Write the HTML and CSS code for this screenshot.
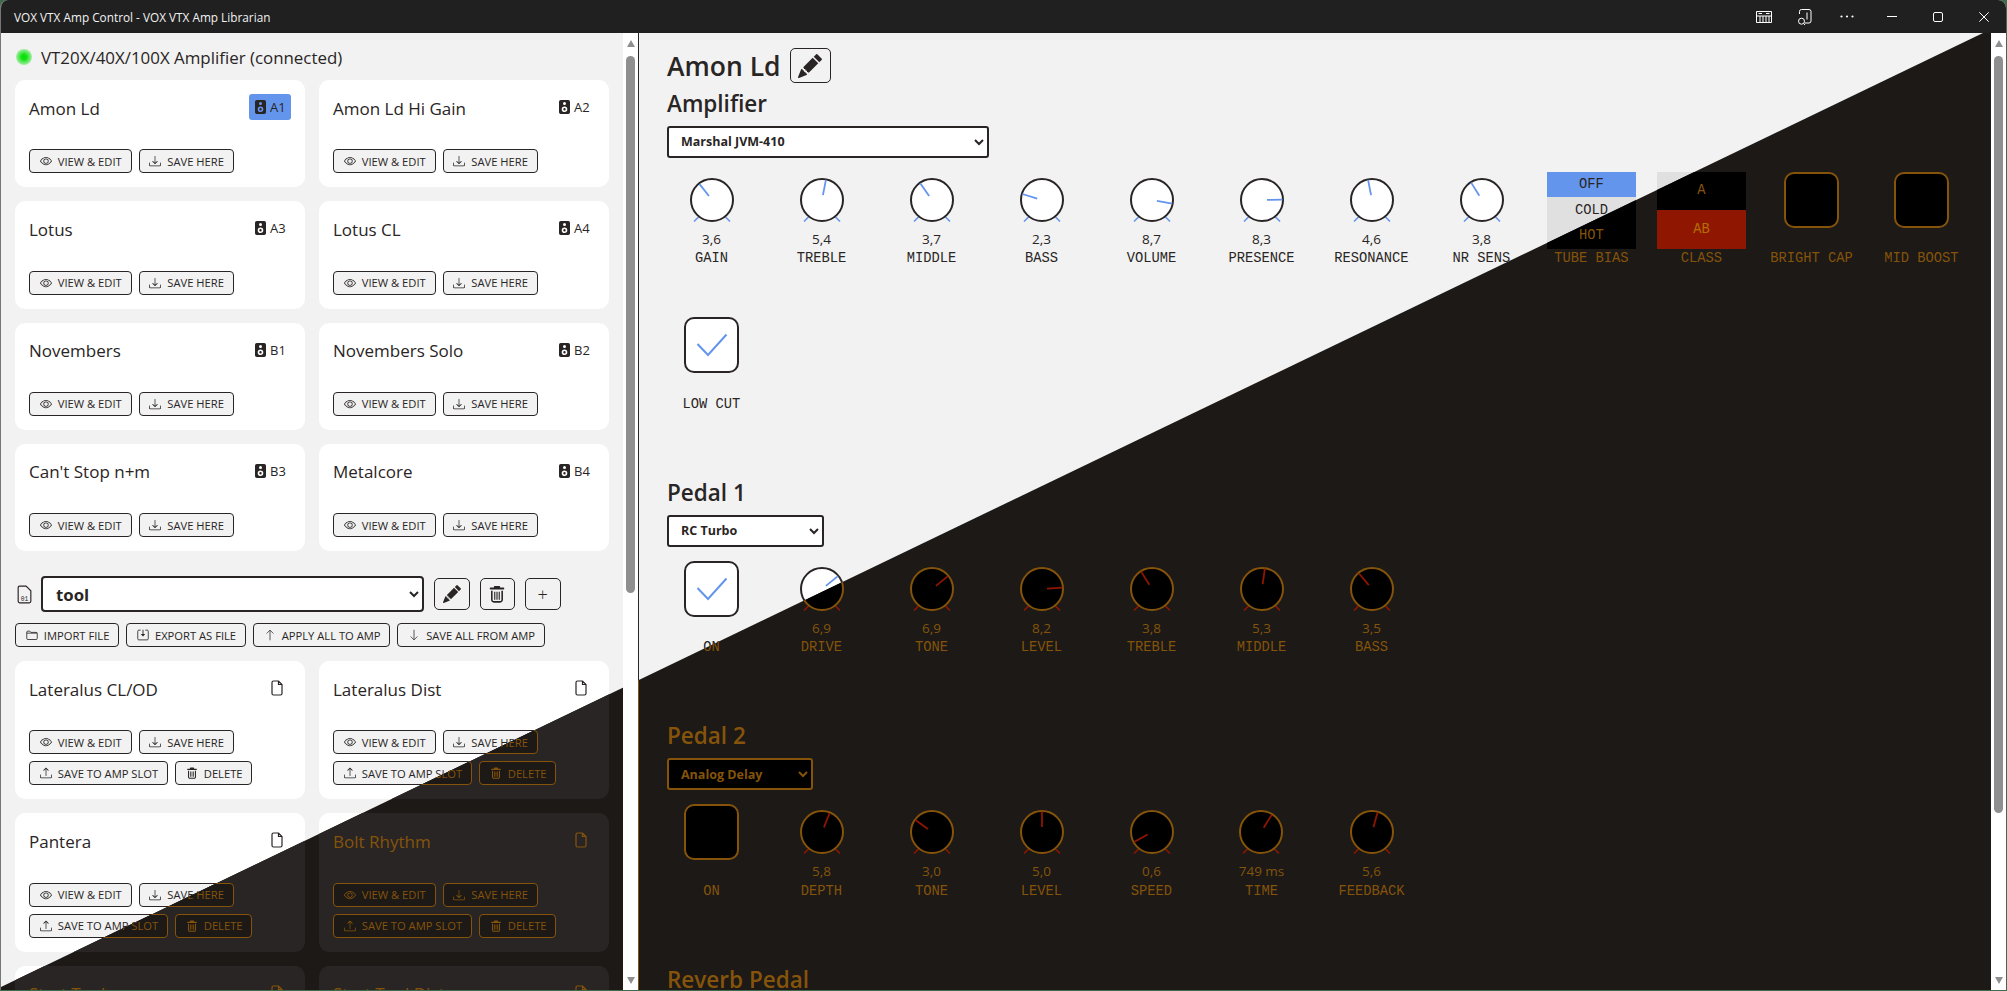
FILE: index.html
```html
<!DOCTYPE html>
<html lang="en">
<head>
<meta charset="utf-8">
<title>VOX VTX Amp Control - VOX VTX Amp Librarian</title>
<link rel="stylesheet" href="styles.css">
</head>
<body>
<svg class="defs" aria-hidden="true">
  <symbol id="i-eye" viewBox="0 0 16 16"><path d="M16 8s-3-5.5-8-5.5S0 8 0 8s3 5.5 8 5.5S16 8 16 8zM1.173 8a13.133 13.133 0 0 1 1.66-2.043C4.12 4.668 5.88 3.5 8 3.5c2.12 0 3.879 1.168 5.168 2.457A13.133 13.133 0 0 1 14.828 8c-.058.087-.122.183-.195.288-.335.48-.83 1.12-1.465 1.755C11.879 11.332 10.119 12.5 8 12.5c-2.12 0-3.879-1.168-5.168-2.457A13.134 13.134 0 0 1 1.172 8z"/><path d="M8 5.5a2.5 2.5 0 1 0 0 5 2.5 2.5 0 0 0 0-5zM4.5 8a3.5 3.5 0 1 1 7 0 3.5 3.5 0 0 1-7 0z"/></symbol>
  <symbol id="i-down" viewBox="0 0 16 16"><path d="M.5 9.9a.5.5 0 0 1 .5.5v2.5a1 1 0 0 0 1 1h12a1 1 0 0 0 1-1v-2.5a.5.5 0 0 1 1 0v2.5a2 2 0 0 1-2 2H2a2 2 0 0 1-2-2v-2.5a.5.5 0 0 1 .5-.5z"/><path d="M7.646 11.854a.5.5 0 0 0 .708 0l3-3a.5.5 0 0 0-.708-.708L8.5 10.293V1.5a.5.5 0 0 0-1 0v8.793L5.354 8.146a.5.5 0 1 0-.708.708l3 3z"/></symbol>
  <symbol id="i-up" viewBox="0 0 16 16"><path d="M.5 9.9a.5.5 0 0 1 .5.5v2.5a1 1 0 0 0 1 1h12a1 1 0 0 0 1-1v-2.5a.5.5 0 0 1 1 0v2.5a2 2 0 0 1-2 2H2a2 2 0 0 1-2-2v-2.5a.5.5 0 0 1 .5-.5z"/><path d="M7.646 1.146a.5.5 0 0 1 .708 0l3 3a.5.5 0 0 1-.708.708L8.5 2.707V11.5a.5.5 0 0 1-1 0V2.707L5.354 4.854a.5.5 0 1 1-.708-.708l3-3z"/></symbol>
  <symbol id="i-pencil" viewBox="0 0 16 16"><path d="M12.854.146a.5.5 0 0 0-.707 0L10.5 1.793 14.207 5.5l1.647-1.646a.5.5 0 0 0 0-.708l-3-3zm.646 6.061L9.793 2.5 3.293 9H3.5a.5.5 0 0 1 .5.5v.5h.5a.5.5 0 0 1 .5.5v.5h.5a.5.5 0 0 1 .5.5v.5h.5a.5.5 0 0 1 .5.5v.207l6.5-6.5zm-7.468 7.468A.5.5 0 0 1 6 13.5V13h-.5a.5.5 0 0 1-.5-.5V12h-.5a.5.5 0 0 1-.5-.5V11h-.5a.5.5 0 0 1-.5-.5V10h-.5a.499.499 0 0 1-.175-.032l-.179.178a.5.5 0 0 0-.11.168l-2 5a.5.5 0 0 0 .65.65l5-2a.5.5 0 0 0 .168-.11l.178-.178z"/></symbol>
  <symbol id="i-trash" viewBox="0 0 16 16"><path d="M5.6.8h4.8l.5 1.5h2.7a.9.9 0 0 1 0 1.8H2.4a.9.9 0 0 1 0-1.8h2.7z"/><path class="st" stroke-width="1.4" d="M3.4 5v8.2a1.8 1.8 0 0 0 1.8 1.8h5.6a1.8 1.8 0 0 0 1.8-1.8V5"/><path class="st" stroke-width="1" d="M6 6v7M8 6v7M10 6v7"/></symbol>
  <symbol id="i-file" viewBox="0 0 12 16"><path class="st" stroke-width="1.2" d="M1 2.500A1.500 1.500 0 0 1 2.500 1H7.500L11 4.500V13.500A1.500 1.500 0 0 1 9.500 15H2.500A1.500 1.500 0 0 1 1 13.500zM7.500 1V4.500H11"/></symbol>
  <symbol id="i-speaker" viewBox="0 0 11 14"><path fill-rule="evenodd" d="M1.8 0h7.4A1.8 1.8 0 0 1 11 1.800v10.400A1.800 1.800 0 0 1 9.200 14H1.800A1.800 1.800 0 0 1 0 12.200V1.800A1.800 1.800 0 0 1 1.800 0zM5.500 2a1.500 1.500 0 1 0 0 3 1.500 1.500 0 0 0 0-3zM5.500 6.400a2.800 2.800 0 1 0 0 5.600 2.800 2.800 0 0 0 0-5.600zM5.500 8a1.200 1.200 0 1 1 0 2.400 1.200 1.200 0 0 1 0-2.400z"/></symbol>
  <symbol id="i-folder" viewBox="0 0 16 16"><path class="st" stroke-width="1.1" d="M1 4V12.500A1.500 1.500 0 0 0 2.500 14H13.500A1.500 1.500 0 0 0 15 12.500V6A1.500 1.500 0 0 0 13.500 4.500H6.500L5 2.800H2.500A1.500 1.500 0 0 0 1 4zM1 5.500H15"/></symbol>
  <symbol id="i-export" viewBox="0 0 16 16"><path class="st" stroke-width="1.100" d="M5 1.500H2.500A1.500 1.500 0 0 0 1 3V13A1.500 1.500 0 0 0 2.500 14.500H13.500A1.500 1.500 0 0 0 15 13V3A1.500 1.500 0 0 0 13.500 1.500H11"/><path d="M7.400 1h1.200v5.500h2.400L8 10 5 6.500h2.400z"/></symbol>
  <symbol id="i-arrow-up" viewBox="0 0 16 16"><path class="st" stroke-width="1" d="M8 15V1.500M3.500 6L8 1.500 12.500 6"/></symbol>
  <symbol id="i-arrow-down" viewBox="0 0 16 16"><path class="st" stroke-width="1" d="M8 1V14.500M3.500 10L8 14.500 12.500 10"/></symbol>
  <symbol id="knob" viewBox="-22 -22 44 44" overflow="visible">
    <path class="tick" d="M-18 21.500L-13 16.500"/>
    <path class="tick" d="M18 21.500L13 16.500"/>
    <circle class="dial" r="21"/>
  </symbol>
</svg>

<div class="window">
  <header class="titlebar">
    <span class="title">VOX VTX Amp Control - VOX VTX Amp Librarian</span>
    <div class="winctl">
      <svg class="wi w-piano" viewBox="0 0 16 12"><path d="M.5.500H15.500V11.500H.5zM.5 5H15.500M4 5V11.500M7 5V11.500M10 5V11.500M13 5V11.500M2.500 2.500H6M10 2.500H13.500"/></svg>
      <svg class="wi w-phone" viewBox="0 0 16 16"><path d="M3.500 5V2.500A2 2 0 0 1 5.500.500H13A2 2 0 0 1 15 2.500V12A2 2 0 0 1 13 14H8.500M11 3.500V10.500M8.500 12.200A3 3 0 1 1 2.500 12.200 3 3 0 0 1 8.500 12.200zM7.500 14.500L9 16"/></svg>
      <svg class="wi w-dots" viewBox="0 0 14 3"><circle cx="1.500" cy="1.500" r="1.100"/><circle cx="7" cy="1.500" r="1.100"/><circle cx="12.500" cy="1.500" r="1.100"/></svg>
      <svg class="wi w-min" viewBox="0 0 10 1"><path d="M0 .5H10"/></svg>
      <svg class="wi w-max" viewBox="0 0 10 10"><rect x=".5" y=".5" width="9" height="9" rx="1.500"/></svg>
      <svg class="wi w-close" viewBox="0 0 10 10"><path d="M.3.300L9.700 9.700M9.700.300L.3 9.700"/></svg>
    </div>
  </header>

  <div class="stage">
    <div class="app light">
      <aside class="library">
        <div class="status"><span class="led"></span><span>VT20X/40X/100X Amplifier (connected)</span></div>
        <div class="cards">
          <article class="card"><div class="card-head"><span class="name">Amon Ld</span><span class="slot slot-on"><svg class="ic-sp"><use href="#i-speaker"/></svg>A1</span></div><div class="actions"><button class="btn"><svg class="ic"><use href="#i-eye"/></svg>View &amp; Edit</button><button class="btn"><svg class="ic"><use href="#i-down"/></svg>Save here</button></div></article>
          <article class="card"><div class="card-head"><span class="name">Amon Ld Hi Gain</span><span class="slot"><svg class="ic-sp"><use href="#i-speaker"/></svg>A2</span></div><div class="actions"><button class="btn"><svg class="ic"><use href="#i-eye"/></svg>View &amp; Edit</button><button class="btn"><svg class="ic"><use href="#i-down"/></svg>Save here</button></div></article>
          <article class="card"><div class="card-head"><span class="name">Lotus</span><span class="slot"><svg class="ic-sp"><use href="#i-speaker"/></svg>A3</span></div><div class="actions"><button class="btn"><svg class="ic"><use href="#i-eye"/></svg>View &amp; Edit</button><button class="btn"><svg class="ic"><use href="#i-down"/></svg>Save here</button></div></article>
          <article class="card"><div class="card-head"><span class="name">Lotus CL</span><span class="slot"><svg class="ic-sp"><use href="#i-speaker"/></svg>A4</span></div><div class="actions"><button class="btn"><svg class="ic"><use href="#i-eye"/></svg>View &amp; Edit</button><button class="btn"><svg class="ic"><use href="#i-down"/></svg>Save here</button></div></article>
          <article class="card"><div class="card-head"><span class="name">Novembers</span><span class="slot"><svg class="ic-sp"><use href="#i-speaker"/></svg>B1</span></div><div class="actions"><button class="btn"><svg class="ic"><use href="#i-eye"/></svg>View &amp; Edit</button><button class="btn"><svg class="ic"><use href="#i-down"/></svg>Save here</button></div></article>
          <article class="card"><div class="card-head"><span class="name">Novembers Solo</span><span class="slot"><svg class="ic-sp"><use href="#i-speaker"/></svg>B2</span></div><div class="actions"><button class="btn"><svg class="ic"><use href="#i-eye"/></svg>View &amp; Edit</button><button class="btn"><svg class="ic"><use href="#i-down"/></svg>Save here</button></div></article>
          <article class="card"><div class="card-head"><span class="name">Can't Stop n+m</span><span class="slot"><svg class="ic-sp"><use href="#i-speaker"/></svg>B3</span></div><div class="actions"><button class="btn"><svg class="ic"><use href="#i-eye"/></svg>View &amp; Edit</button><button class="btn"><svg class="ic"><use href="#i-down"/></svg>Save here</button></div></article>
          <article class="card"><div class="card-head"><span class="name">Metalcore</span><span class="slot"><svg class="ic-sp"><use href="#i-speaker"/></svg>B4</span></div><div class="actions"><button class="btn"><svg class="ic"><use href="#i-eye"/></svg>View &amp; Edit</button><button class="btn"><svg class="ic"><use href="#i-down"/></svg>Save here</button></div></article>
        </div>

        <div class="lib-row">
          <svg class="ic-bank" viewBox="0 0 14 18"><path class="st" stroke-width="1.1" d="M1 2.500A1.500 1.500 0 0 1 2.500 1H8.500L13 5.500V15.500A1.500 1.500 0 0 1 11.500 17H2.500A1.500 1.500 0 0 1 1 15.500z"/><text x="7" y="15" class="bank-text">01</text></svg>
          <select class="sel-lib"><option>tool</option><option>metal</option></select>
          <button class="sq"><svg class="ic-lg"><use href="#i-pencil"/></svg></button>
          <button class="sq"><svg class="ic-lg"><use href="#i-trash"/></svg></button>
          <button class="sq sq-plus">+</button>
        </div>
        <div class="actions lib-actions">
          <button class="btn"><svg class="ic"><use href="#i-folder"/></svg>Import file</button>
          <button class="btn"><svg class="ic"><use href="#i-export"/></svg>Export as file</button>
          <button class="btn"><svg class="ic"><use href="#i-arrow-up"/></svg>Apply all to amp</button>
          <button class="btn"><svg class="ic"><use href="#i-arrow-down"/></svg>Save all from amp</button>
        </div>

        <div class="cards">
          <article class="card"><div class="card-head"><span class="name">Lateralus CL/OD</span><span class="slot slot-file"><svg class="ic-file"><use href="#i-file"/></svg></span></div><div class="actions"><button class="btn"><svg class="ic"><use href="#i-eye"/></svg>View &amp; Edit</button><button class="btn"><svg class="ic"><use href="#i-down"/></svg>Save here</button><button class="btn"><svg class="ic"><use href="#i-up"/></svg>Save to amp slot</button><button class="btn"><svg class="ic"><use href="#i-trash"/></svg>Delete</button></div></article>
          <article class="card"><div class="card-head"><span class="name">Lateralus Dist</span><span class="slot slot-file"><svg class="ic-file"><use href="#i-file"/></svg></span></div><div class="actions"><button class="btn"><svg class="ic"><use href="#i-eye"/></svg>View &amp; Edit</button><button class="btn"><svg class="ic"><use href="#i-down"/></svg>Save here</button><button class="btn"><svg class="ic"><use href="#i-up"/></svg>Save to amp slot</button><button class="btn"><svg class="ic"><use href="#i-trash"/></svg>Delete</button></div></article>
          <article class="card"><div class="card-head"><span class="name">Pantera</span><span class="slot slot-file"><svg class="ic-file"><use href="#i-file"/></svg></span></div><div class="actions"><button class="btn"><svg class="ic"><use href="#i-eye"/></svg>View &amp; Edit</button><button class="btn"><svg class="ic"><use href="#i-down"/></svg>Save here</button><button class="btn"><svg class="ic"><use href="#i-up"/></svg>Save to amp slot</button><button class="btn"><svg class="ic"><use href="#i-trash"/></svg>Delete</button></div></article>
          <article class="card"><div class="card-head"><span class="name">Bolt Rhythm</span><span class="slot slot-file"><svg class="ic-file"><use href="#i-file"/></svg></span></div><div class="actions"><button class="btn"><svg class="ic"><use href="#i-eye"/></svg>View &amp; Edit</button><button class="btn"><svg class="ic"><use href="#i-down"/></svg>Save here</button><button class="btn"><svg class="ic"><use href="#i-up"/></svg>Save to amp slot</button><button class="btn"><svg class="ic"><use href="#i-trash"/></svg>Delete</button></div></article>
          <article class="card"><div class="card-head"><span class="name">Start Tool</span><span class="slot slot-file"><svg class="ic-file"><use href="#i-file"/></svg></span></div></article>
          <article class="card"><div class="card-head"><span class="name">Start Tool Dist</span><span class="slot slot-file"><svg class="ic-file"><use href="#i-file"/></svg></span></div></article>
        </div>
      </aside>

      <main class="editor">
        <div class="patch-head"><h1>Amon Ld</h1><button class="sq sq-title"><svg class="ic-xl"><use href="#i-pencil"/></svg></button></div>

        <section class="block">
          <h2>Amplifier</h2>
          <select class="sel sel-amp"><option>Marshal JVM-410</option></select>
          <div class="controls">
            <div class="col"><div class="ctl"><svg class="knob" viewBox="-22 -22 44 44"><use href="#knob" x="-22" y="-22" width="44" height="44"/><path class="needle" transform="rotate(-38)" d="M0-5V-20.500"/></svg><span class="val">3,6</span></div><span class="lbl">GAIN</span></div>
            <div class="col"><div class="ctl"><svg class="knob" viewBox="-22 -22 44 44"><use href="#knob" x="-22" y="-22" width="44" height="44"/><path class="needle" transform="rotate(11)" d="M0-5V-20.500"/></svg><span class="val">5,4</span></div><span class="lbl">TREBLE</span></div>
            <div class="col"><div class="ctl"><svg class="knob" viewBox="-22 -22 44 44"><use href="#knob" x="-22" y="-22" width="44" height="44"/><path class="needle" transform="rotate(-35)" d="M0-5V-20.500"/></svg><span class="val">3,7</span></div><span class="lbl">MIDDLE</span></div>
            <div class="col"><div class="ctl"><svg class="knob" viewBox="-22 -22 44 44"><use href="#knob" x="-22" y="-22" width="44" height="44"/><path class="needle" transform="rotate(-73)" d="M0-5V-20.500"/></svg><span class="val">2,3</span></div><span class="lbl">BASS</span></div>
            <div class="col"><div class="ctl"><svg class="knob" viewBox="-22 -22 44 44"><use href="#knob" x="-22" y="-22" width="44" height="44"/><path class="needle" transform="rotate(100)" d="M0-5V-20.500"/></svg><span class="val">8,7</span></div><span class="lbl">VOLUME</span></div>
            <div class="col"><div class="ctl"><svg class="knob" viewBox="-22 -22 44 44"><use href="#knob" x="-22" y="-22" width="44" height="44"/><path class="needle" transform="rotate(89)" d="M0-5V-20.500"/></svg><span class="val">8,3</span></div><span class="lbl">PRESENCE</span></div>
            <div class="col"><div class="ctl"><svg class="knob" viewBox="-22 -22 44 44"><use href="#knob" x="-22" y="-22" width="44" height="44"/><path class="needle" transform="rotate(-11)" d="M0-5V-20.500"/></svg><span class="val">4,6</span></div><span class="lbl">RESONANCE</span></div>
            <div class="col"><div class="ctl"><svg class="knob" viewBox="-22 -22 44 44"><use href="#knob" x="-22" y="-22" width="44" height="44"/><path class="needle" transform="rotate(-32)" d="M0-5V-20.500"/></svg><span class="val">3,8</span></div><span class="lbl">NR SENS</span></div>
            <div class="col"><div class="ctl"><div class="switch"><span class="seg on">OFF</span><span class="seg">COLD</span><span class="seg">HOT</span></div></div><span class="lbl">TUBE BIAS</span></div>
            <div class="col"><div class="ctl"><div class="switch"><span class="seg">A</span><span class="seg on">AB</span></div></div><span class="lbl">CLASS</span></div>
            <div class="col"><div class="ctl"><div class="toggle"></div></div><span class="lbl">BRIGHT CAP</span></div>
            <div class="col"><div class="ctl"><div class="toggle"></div></div><span class="lbl">MID BOOST</span></div>
            <div class="col"><div class="ctl"><div class="toggle"><svg class="check" viewBox="0 0 32 24"><path d="M1.500 11L12 22 30.500 1.500"/></svg></div></div><span class="lbl">LOW CUT</span></div>
          </div>
        </section>

        <section class="block">
          <h2>Pedal 1</h2>
          <select class="sel sel-p1"><option>RC Turbo</option></select>
          <div class="controls">
            <div class="col"><div class="ctl"><div class="toggle"><svg class="check" viewBox="0 0 32 24"><path d="M1.500 11L12 22 30.500 1.500"/></svg></div></div><span class="lbl">ON</span></div>
            <div class="col"><div class="ctl"><svg class="knob" viewBox="-22 -22 44 44"><use href="#knob" x="-22" y="-22" width="44" height="44"/><path class="needle" transform="rotate(51)" d="M0-5V-20.500"/></svg><span class="val">6,9</span></div><span class="lbl">DRIVE</span></div>
            <div class="col"><div class="ctl"><svg class="knob" viewBox="-22 -22 44 44"><use href="#knob" x="-22" y="-22" width="44" height="44"/><path class="needle" transform="rotate(51)" d="M0-5V-20.500"/></svg><span class="val">6,9</span></div><span class="lbl">TONE</span></div>
            <div class="col"><div class="ctl"><svg class="knob" viewBox="-22 -22 44 44"><use href="#knob" x="-22" y="-22" width="44" height="44"/><path class="needle" transform="rotate(86)" d="M0-5V-20.500"/></svg><span class="val">8,2</span></div><span class="lbl">LEVEL</span></div>
            <div class="col"><div class="ctl"><svg class="knob" viewBox="-22 -22 44 44"><use href="#knob" x="-22" y="-22" width="44" height="44"/><path class="needle" transform="rotate(-32)" d="M0-5V-20.500"/></svg><span class="val">3,8</span></div><span class="lbl">TREBLE</span></div>
            <div class="col"><div class="ctl"><svg class="knob" viewBox="-22 -22 44 44"><use href="#knob" x="-22" y="-22" width="44" height="44"/><path class="needle" transform="rotate(8)" d="M0-5V-20.500"/></svg><span class="val">5,3</span></div><span class="lbl">MIDDLE</span></div>
            <div class="col"><div class="ctl"><svg class="knob" viewBox="-22 -22 44 44"><use href="#knob" x="-22" y="-22" width="44" height="44"/><path class="needle" transform="rotate(-40)" d="M0-5V-20.500"/></svg><span class="val">3,5</span></div><span class="lbl">BASS</span></div>
          </div>
        </section>

        <section class="block">
          <h2>Pedal 2</h2>
          <select class="sel sel-p2"><option>Analog Delay</option></select>
          <div class="controls">
            <div class="col"><div class="ctl"><div class="toggle"></div></div><span class="lbl">ON</span></div>
            <div class="col"><div class="ctl"><svg class="knob" viewBox="-22 -22 44 44"><use href="#knob" x="-22" y="-22" width="44" height="44"/><path class="needle" transform="rotate(22)" d="M0-5V-20.500"/></svg><span class="val">5,8</span></div><span class="lbl">DEPTH</span></div>
            <div class="col"><div class="ctl"><svg class="knob" viewBox="-22 -22 44 44"><use href="#knob" x="-22" y="-22" width="44" height="44"/><path class="needle" transform="rotate(-54)" d="M0-5V-20.500"/></svg><span class="val">3,0</span></div><span class="lbl">TONE</span></div>
            <div class="col"><div class="ctl"><svg class="knob" viewBox="-22 -22 44 44"><use href="#knob" x="-22" y="-22" width="44" height="44"/><path class="needle" d="M0-5V-20.500"/></svg><span class="val">5,0</span></div><span class="lbl">LEVEL</span></div>
            <div class="col"><div class="ctl"><svg class="knob" viewBox="-22 -22 44 44"><use href="#knob" x="-22" y="-22" width="44" height="44"/><path class="needle" transform="rotate(-119)" d="M0-5V-20.500"/></svg><span class="val">0,6</span></div><span class="lbl">SPEED</span></div>
            <div class="col"><div class="ctl"><svg class="knob" viewBox="-22 -22 44 44"><use href="#knob" x="-22" y="-22" width="44" height="44"/><path class="needle" transform="rotate(32)" d="M0-5V-20.500"/></svg><span class="val">749 ms</span></div><span class="lbl">TIME</span></div>
            <div class="col"><div class="ctl"><svg class="knob" viewBox="-22 -22 44 44"><use href="#knob" x="-22" y="-22" width="44" height="44"/><path class="needle" transform="rotate(16)" d="M0-5V-20.500"/></svg><span class="val">5,6</span></div><span class="lbl">FEEDBACK</span></div>
          </div>
        </section>

        <section class="block">
          <h2>Reverb Pedal</h2>
        </section>
      </main>
    </div>

    <div class="sbar sbar-left"><span class="sb-up"></span><span class="sb-thumb"></span><span class="sb-down"></span></div>
    <div class="sbar sbar-right"><span class="sb-up"></span><span class="sb-thumb"></span><span class="sb-down"></span></div>
  </div>
</div>
<script src="app.js"></script>
</body>
</html>
```
FILE: styles.css
```css
* { box-sizing: border-box; }

html, body {
  margin: 0;
  height: 100%;
  overflow: hidden;
  background: #3f6b4a;
}

.defs { position: absolute; width: 0; height: 0; }
.st { fill: none; stroke: currentColor; }

.window {
  width: 2006px;
  height: 990px;
  display: flex;
  flex-direction: column;
  border-radius: 8px 8px 0 0;
  overflow: hidden;
  background: #f2f2f2;
  border-left: 1px solid #777;
}

.titlebar {
  height: 33px;
  flex: none;
  display: flex;
  align-items: center;
  justify-content: space-between;
  background: #202020;
  color: #f2f2f2;
  font: 11.8px "Open Sans", sans-serif;
  padding-left: 13px;
}

.winctl { display: flex; align-items: center; padding-right: 17px; }
.wi { fill: none; stroke: #fff; stroke-width: 1; display: block; }
.w-piano { width: 16px; height: 12px; margin-right: 24px; }
.w-phone { width: 16px; height: 16px; margin-right: 28px; }
.w-dots { width: 14px; height: 3px; margin-right: 33px; fill: #fff; stroke: none; }
.w-min { width: 10px; height: 1px; margin-right: 36px; }
.w-max { width: 10px; height: 10px; margin-right: 36px; }
.w-close { width: 10px; height: 10px; }

.stage { position: relative; flex: 1; min-height: 0; }

.app {
  height: 100%;
  display: flex;
  overflow: hidden;
  font-family: "Open Sans", sans-serif;
  color: var(--ink);
  background: var(--bg);
}

.light {
  --ink: #292524;
  --bg: #f2f2f2;
  --card: #fff;
  --btn: #f2f2f2;
  --line: #292524;
  --field: #fff;
  --accent: #6495ed;
  --seg: #e0e0e0;
  --on-ink: #292524;
}

.dark {
  --ink: #85540a;
  --bg: #1c1917;
  --card: #292524;
  --btn: #1c1917;
  --line: #85540a;
  --field: #000;
  --accent: #8f1600;
  --seg: #000;
  --on-ink: #b36f05;
  position: absolute;
  inset: 0;
  clip-path: polygon(1982px 0, 100% 0, 100% 100%, 0 100%, 0 954px);
}

/* library column */
.library {
  width: 638px;
  flex: none;
  padding: 0 29px 0 14px;
  border-right: 1px solid var(--line);
  overflow: hidden;
}

.status {
  height: 47px;
  display: flex;
  align-items: center;
  gap: 9px;
  font-size: 16.9px;
  padding: 1px 0 0 1px;
}

.led {
  width: 16px;
  height: 16px;
  margin-top: -1px;
  border-radius: 50%;
  background: radial-gradient(circle, #00e600 0, #10e210 22%, #8ceb8c 62%, rgba(200, 240, 200, .3) 92%, rgba(200, 240, 200, 0) 100%);
}

.cards {
  display: grid;
  grid-template-columns: 290px 290px;
  gap: 14px;
}

.card {
  background: var(--card);
  border-radius: 10px;
  padding: 14px;
}

.card-head {
  height: 28px;
  margin-bottom: 27.3px;
  display: flex;
  align-items: center;
  justify-content: space-between;
}

.name { font-size: 17px; }

.slot {
  height: 26px;
  width: 42px;
  border-radius: 3px;
  display: flex;
  align-items: center;
  gap: 4px;
  padding-left: 6px;
  font-size: 13px;
  margin-top: -2px;
}

.slot-on { background: var(--accent); }
.slot-file { padding-left: 22px; }
.ic-sp { width: 11px; height: 14px; fill: currentColor; }
.ic-file { width: 12px; height: 16px; }

.actions { display: flex; flex-wrap: wrap; gap: 7px; }

.btn {
  height: 24px;
  padding: 0 8.8px 0 9.8px;
  display: flex;
  align-items: center;
  gap: 6px;
  border: 1px solid var(--line);
  border-radius: 4px;
  background: var(--btn);
  color: var(--ink);
  font: 11.2px "Open Sans", sans-serif;
  text-transform: uppercase;
  white-space: nowrap;
}

.ic { width: 12px; height: 12px; fill: currentColor; flex: none; }

.lib-row {
  display: flex;
  align-items: center;
  margin-top: 25px;
  height: 36px;
  gap: 10px;
}

.ic-bank { width: 15px; height: 19px; margin: 0 0 0 2px; color: var(--ink); }
.bank-text { font: 6px "Liberation Mono", monospace; fill: currentColor; text-anchor: middle; }

.sel-lib {
  width: 383px;
  height: 36px;
  margin-left: -1px;
  padding-left: 9px;
  border: 2.5px solid var(--line);
  border-radius: 4px;
  background: var(--field);
  color: var(--ink);
  font: 700 16.8px "Open Sans", sans-serif;
}

.sq {
  width: 35.5px;
  height: 32px;
  padding: 0;
  display: flex;
  align-items: center;
  justify-content: center;
  border: 1px solid var(--line);
  border-radius: 5px;
  background: var(--btn);
  color: var(--ink);
}

.sq-plus { font: 300 18px "Open Sans", sans-serif; }
.ic-lg { width: 18px; height: 18px; fill: currentColor; }

.lib-actions { margin: 11px 0 14px; }

/* editor column */
.editor {
  flex: 1;
  min-width: 0;
  padding: 15px 29px 0 28px;
  overflow: hidden;
}

.patch-head { display: flex; align-items: center; gap: 9px; height: 35px; }

h1 { margin: 0; font-size: 26.5px; font-weight: 600; }

.sq-title { width: 41px; height: 35px; }
.ic-xl { width: 24px; height: 24px; fill: currentColor; }

.block { margin-bottom: 62px; }
.patch-head + .block { margin-top: 4.5px; }

h2 {
  margin: 0 0 6px;
  height: 32px;
  line-height: 32px;
  font-size: 22.5px;
  font-weight: 600;
}

.sel {
  display: block;
  height: 32px;
  padding-left: 8px;
  border: 2px solid var(--line);
  border-radius: 3px;
  background: var(--field);
  color: var(--ink);
  font: 700 12.5px "Open Sans", sans-serif;
}

.sel-amp { width: 322px; }
.sel-p1 { width: 157px; }
.sel-p2 { width: 146px; }

.controls {
  display: flex;
  flex-wrap: wrap;
  row-gap: 48px;
  margin: 14px 0 0 -10.5px;
}

.col {
  width: 110px;
  height: 97.5px;
  display: flex;
  flex-direction: column;
  align-items: center;
}

.ctl {
  height: 77.5px;
  display: flex;
  flex-direction: column;
  align-items: center;
}

.knob {
  width: 44px;
  height: 44px;
  margin: 6px 0 7px;
  overflow: visible;
  flex: none;
}

.tick { stroke: var(--accent); stroke-width: 1.6; fill: none; }
.dial { fill: var(--field); stroke: var(--line); stroke-width: 2; }
.needle { stroke: var(--accent); stroke-width: 1.8; fill: none; }

.val { font-size: 13.5px; line-height: 20px; }

.lbl {
  font: 13.75px/20px "Liberation Mono", monospace;
  white-space: pre;
}

.switch {
  width: 89px;
  height: 77px;
  display: flex;
  flex-direction: column;
}

.seg {
  flex: 1;
  display: flex;
  align-items: center;
  justify-content: center;
  background: var(--seg);
  font: 13.75px "Liberation Mono", monospace;
}

.seg.on { background: var(--accent); color: var(--on-ink); }

.toggle {
  width: 55px;
  height: 56px;
  display: flex;
  align-items: center;
  justify-content: center;
  border: 2px solid var(--line);
  border-radius: 10px;
  background: var(--field);
}

.check { width: 32px; height: 24px; fill: none; stroke: #6495ed; stroke-width: 2; }

/* scrollbars stay outside the themed layers */
.sbar {
  position: absolute;
  top: 0;
  bottom: 0;
  width: 15px;
  background: #fff;
  display: flex;
  flex-direction: column;
  align-items: center;
}

.sbar-left { left: 622px; }
.sbar-right { right: 0; }

.sb-up, .sb-down {
  position: absolute;
  width: 0;
  height: 0;
  border-left: 4.5px solid transparent;
  border-right: 4.5px solid transparent;
}

.sb-up { top: 7px; border-bottom: 7px solid #8f8f8f; }
.sb-down { bottom: 6px; border-top: 7px solid #8f8f8f; }

.sb-thumb {
  width: 9px;
  margin-top: 23px;
  border-radius: 5px;
  background: #8f8f8f;
}

.sbar-left .sb-thumb { height: 537px; }
.sbar-right .sb-thumb { height: 757px; }
```
FILE: app.js
```js
// The reference shows both themes split along a diagonal: the dark layer is a copy of the light one.
const lightLayer = document.querySelector('.app.light');
const darkLayer = lightLayer.cloneNode(true);
darkLayer.classList.replace('light', 'dark');
darkLayer.setAttribute('aria-hidden', 'true');
lightLayer.after(darkLayer);
```
